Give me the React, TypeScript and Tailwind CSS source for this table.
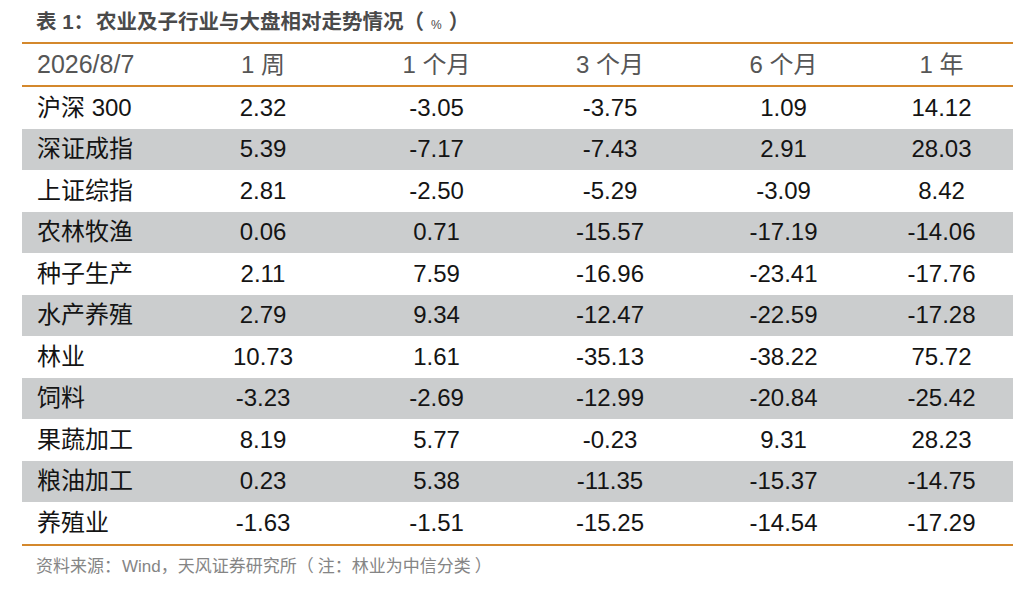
import React from "react";

const rows: [string, string, string, string, string, string][] = [
  ["沪深 300", "2.32", "-3.05", "-3.75", "1.09", "14.12"],
  ["深证成指", "5.39", "-7.17", "-7.43", "2.91", "28.03"],
  ["上证综指", "2.81", "-2.50", "-5.29", "-3.09", "8.42"],
  ["农林牧渔", "0.06", "0.71", "-15.57", "-17.19", "-14.06"],
  ["种子生产", "2.11", "7.59", "-16.96", "-23.41", "-17.76"],
  ["水产养殖", "2.79", "9.34", "-12.47", "-22.59", "-17.28"],
  ["林业", "10.73", "1.61", "-35.13", "-38.22", "75.72"],
  ["饲料", "-3.23", "-2.69", "-12.99", "-20.84", "-25.42"],
  ["果蔬加工", "8.19", "5.77", "-0.23", "9.31", "28.23"],
  ["粮油加工", "0.23", "5.38", "-11.35", "-15.37", "-14.75"],
  ["养殖业", "-1.63", "-1.51", "-15.25", "-14.54", "-17.29"],
];

const headers = ["1 周", "1 个月", "3 个月", "6 个月", "1 年"];

const font = { fontFamily: '"Liberation Sans", "Noto Sans CJK SC", sans-serif' };

export default function App() {
  return (
    <div className="w-[1026px] h-[592px] bg-white" style={font}>
      <div className="h-[42px] pt-[8px] pl-[36px] text-[20.5px] leading-[28px] font-semibold text-[#4a4a4a] whitespace-nowrap">
        表 1：<span className="ml-[2px]">农业及子行业与大盘相对走势情况</span>
        <span>（</span>
        <span className="mx-[7px] text-[12px] font-normal">%</span>
        <span className="mr-[4px]">）</span>
      </div>
      <div className="ml-[22px] w-[991px]">
        <div className="grid grid-cols-[154px_174px_173px_174px_173px_143px] h-[45px] border-y-2 border-[#d4882c] items-center text-[24px] text-[#565656]">
          <div className="pl-[15px] text-[25px]">2026/8/7</div>
          {headers.map((h) => (
            <div key={h} className="text-center">
              {h}
            </div>
          ))}
        </div>
        {rows.map((r, i) => (
          <div
            key={r[0]}
            className={
              "grid grid-cols-[154px_174px_173px_174px_173px_143px] h-[41.5px] items-center text-[24px] text-[#141414] " +
              (i % 2 === 1 ? "bg-[#cbcdce]" : "bg-white")
            }
          >
            <div className="pl-[15px] whitespace-nowrap">{r[0]}</div>
            {r.slice(1).map((v, j) => (
              <div key={j} className="text-center">
                {v}
              </div>
            ))}
          </div>
        ))}
        <div className="h-[2px] bg-[#d4882c]" />
      </div>
      <div className="pt-[9px] pl-[36px] text-[17px] leading-[24px] text-[#858585] whitespace-nowrap">
        资料来源：<span className="ml-[1px]">Wind</span>，天风证券研究所
        <span className="mr-[4px]">（</span>注：林业为中信分类<span className="ml-[4px]">）</span>
      </div>
    </div>
  );
}
